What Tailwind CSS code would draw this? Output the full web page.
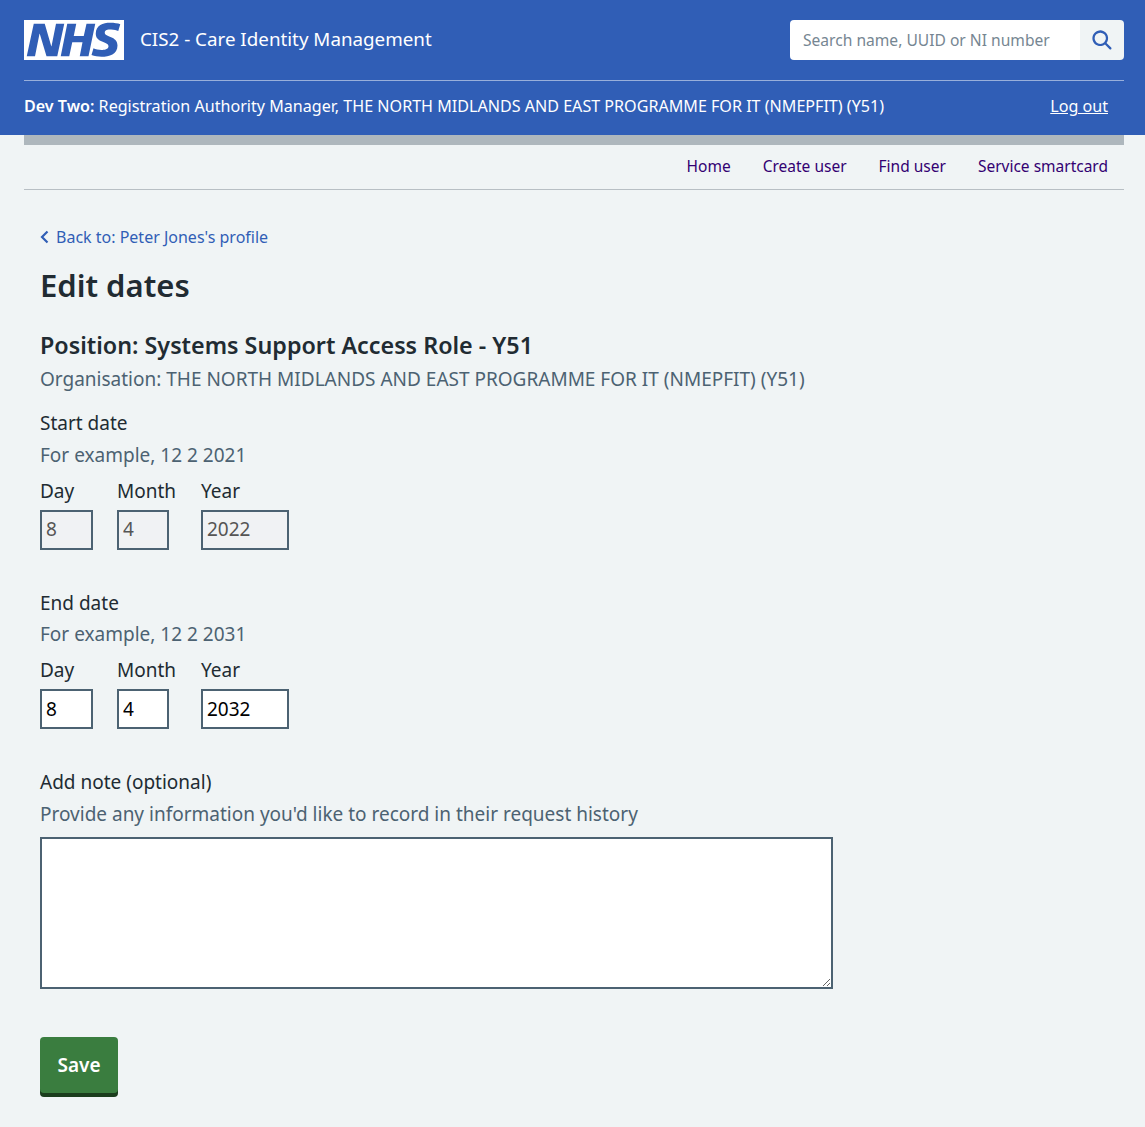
<!DOCTYPE html>
<html lang="en">
<head>
    <meta charset="UTF-8">
    <meta name="viewport" content="width=device-width, initial-scale=1.0">
    <title>Edit dates</title>
    <script src="https://cdn.jsdelivr.net/npm/@tailwindcss/browser@4"></script>
</head>
<body class="bg-[#f0f4f5] min-h-screen text-[#212b32] font-['Noto_Sans',sans-serif]">
    <!-- Header -->
    <header class="bg-[#305eb6] h-[135px] pl-6 pr-[21px] text-white">
        <div class="flex justify-between items-center h-[81px] border-b border-[#98afdb]">
            <div class="flex items-center">
                <svg class="w-[100px] h-[40px]" viewBox="0 0 40 16"><path fill="#fff" d="M0 0h40v16H0z"></path><path fill="#305eb6" d="M3.9 1.5h4.4l2.6 9h.1l1.8-9h3.3l-2.8 13H9l-2.7-9h-.1l-1.8 9H1.1M17.3 1.5h3.6l-1 4.9h4L25 1.5h3.5l-2.7 13h-3.5l1.1-5.6h-4.1l-1.2 5.6h-3.4M37.7 4.4c-.7-.3-1.6-.6-2.9-.6-1.4 0-2.5.2-2.5 1.3 0 1.8 5.1 1.2 5.1 5.1 0 3.6-3.3 4.5-6.4 4.5-1.3 0-2.9-.3-4-.7l.8-2.7c.7.4 2.1.7 3.2.7s2.8-.2 2.8-1.5c0-2.1-5.1-1.3-5.1-5 0-3.4 2.9-4.4 5.8-4.4 1.6 0 3.1.2 4 .6"></path></svg>
                <span class="ml-4 pb-[2px] text-[18.8px]">CIS2 - Care Identity Management</span>
            </div>
            <div class="flex w-[334px] h-[40px] rounded overflow-hidden">
                <input class="w-[290px] bg-white px-[13px] pt-[2px] text-[15.6px] placeholder-[#768692]" placeholder="Search name, UUID or NI number">
                <button class="w-[44px] bg-[#f0f4f5] flex items-center justify-center">
                    <svg class="w-[27px] h-[27px]" viewBox="0 0 24 24" fill="#305eb6"><path d="M19.71 18.29l-4.11-4.1a7 7 0 1 0-1.41 1.41l4.1 4.11a1 1 0 0 0 1.42 0 1 1 0 0 0 0-1.42zM5 10a5 5 0 1 1 5 5 5 5 0 0 1-5-5z"></path></svg>
                </button>
            </div>
        </div>
        <div class="flex justify-between items-center h-[50px] pr-4 text-[16.1px]">
            <div><b class="font-semibold">Dev Two:</b> Registration Authority Manager, THE NORTH MIDLANDS AND EAST PROGRAMME FOR IT (NMEPFIT) (Y51)</div>
            <a href="#" class="underline">Log out</a>
        </div>
    </header>

    <!-- Nav -->
    <nav class="ml-6 mr-[21px] border-t-[10px] border-[#aeb7bd]">
        <div class="flex justify-end gap-8 h-[45px] items-center pr-4 border-b border-[#b8bfc4] text-[15.5px] text-[#330072]">
            <a href="#">Home</a>
            <a href="#">Create user</a>
            <a href="#">Find user</a>
            <a href="#">Service smartcard</a>
        </div>
    </nav>

    <!-- Main -->
    <main class="px-10 pt-[35px]">
        <a href="#" class="flex items-center text-[16px] leading-6 text-[#305eb6]">
            <svg class="w-[9px] h-[14px] mr-[7px]" viewBox="0 0 9 14" fill="none" stroke="#305eb6" stroke-width="2.2"><path d="M7.5 1.5L2 7l5.5 5.5"></path></svg>
            Back to: Peter Jones's profile
        </a>
        <h1 class="mt-[16px] text-[31px] leading-10 font-semibold">Edit dates</h1>
        <h2 class="mt-[24px] text-[23.3px] leading-8 font-semibold">Position: Systems Support Access Role - Y51</h2>
        <p class="mt-[4px] text-[19px] leading-7 text-[#4c6272]">Organisation: THE NORTH MIDLANDS AND EAST PROGRAMME FOR IT (NMEPFIT) (Y51)</p>

        <div class="mt-[16px]">
            <div class="text-[19px] leading-7">Start date</div>
            <div class="mt-1 text-[19px] leading-7 text-[#4c6272]">For example, 12 2 2021</div>
            <div class="flex mt-[8px]">
                <label class="w-[77px] text-[19px] leading-7">Day
                    <input disabled value="8" class="block mt-[5px] w-[53px] h-[40px] px-1 pb-[2px] border-2 border-[#4c6272] bg-[#f0f2f4] text-[#555]">
                </label>
                <label class="w-[84px] text-[19px] leading-7">Month
                    <input disabled value="4" class="block mt-[5px] w-[52px] h-[40px] px-1 pb-[2px] border-2 border-[#4c6272] bg-[#f0f2f4] text-[#555]">
                </label>
                <label class="w-[88px] text-[19px] leading-7">Year
                    <input disabled value="2022" class="block mt-[5px] w-[88px] h-[40px] px-1 pb-[2px] border-2 border-[#4c6272] bg-[#f0f2f4] text-[#555]">
                </label>
            </div>
        </div>

        <div class="mt-[39px]">
            <div class="text-[19px] leading-7">End date</div>
            <div class="mt-[3px] text-[19px] leading-7 text-[#4c6272]">For example, 12 2 2031</div>
            <div class="flex mt-[8px]">
                <label class="w-[77px] text-[19px] leading-7">Day
                    <input value="8" class="block mt-[5px] w-[53px] h-[40px] px-1 border-2 border-[#4c6272] bg-white text-black">
                </label>
                <label class="w-[84px] text-[19px] leading-7">Month
                    <input value="4" class="block mt-[5px] w-[52px] h-[40px] px-1 border-2 border-[#4c6272] bg-white text-black">
                </label>
                <label class="w-[88px] text-[19px] leading-7">Year
                    <input value="2032" class="block mt-[5px] w-[88px] h-[40px] px-1 border-2 border-[#4c6272] bg-white text-black">
                </label>
            </div>
        </div>

        <div class="mt-[39px]">
            <div class="text-[19px] leading-7">Add note (optional)</div>
            <div class="mt-1 text-[19px] leading-7 text-[#4c6272]">Provide any information you'd like to record in their request history</div>
            <textarea class="block mt-[9px] w-[793px] h-[152px] border-2 border-[#4c6272] bg-white"></textarea>
        </div>

        <button class="block mt-[48px] w-[78px] h-[56px] rounded bg-[#3a7d3f] text-white text-[19px] font-semibold shadow-[0_4px_0_#1b3d1d]">Save</button>
    </main>
</body>
</html>
